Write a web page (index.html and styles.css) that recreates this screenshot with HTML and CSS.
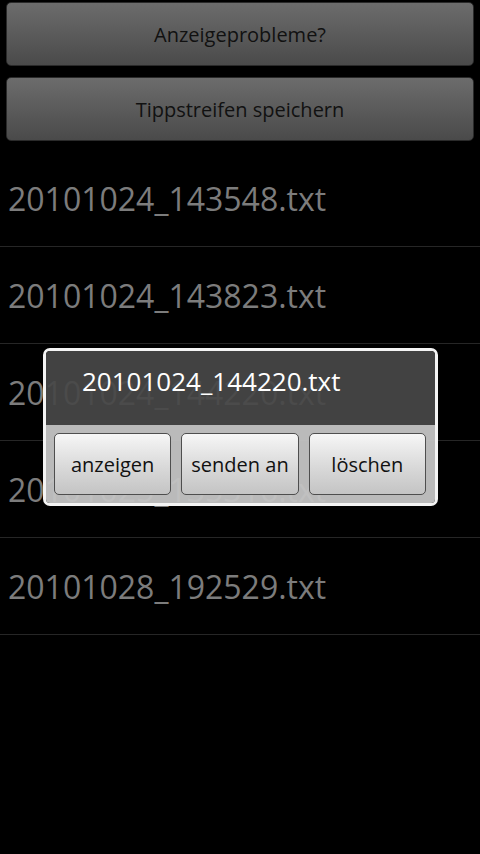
FILE: index.html
```html
<!DOCTYPE html>
<html>
<head>
<meta charset="utf-8">
<link rel="stylesheet" href="styles.css">
</head>
<body>
<div class="screen">
  <div class="actions">
    <div class="btn">Anzeigeprobleme?</div>
    <div class="btn">Tippstreifen speichern</div>
  </div>
  <ul class="list">
    <li>20101024_143548.txt</li>
    <li>20101024_143823.txt</li>
    <li>20101024_144220.txt</li>
    <li>20101025_135316.txt</li>
    <li>20101028_192529.txt</li>
  </ul>
  <div class="dialog">
    <div class="dialog-title">20101024_144220.txt</div>
    <div class="dialog-bar">
      <div class="dbtn">anzeigen</div>
      <div class="dbtn">senden an</div>
      <div class="dbtn">löschen</div>
    </div>
  </div>
</div>
</body>
</html>
```
FILE: styles.css
```css
html, body {
  margin: 0;
  padding: 0;
  background: #000;
}
body {
  font-family: "Open Sans", "DejaVu Sans", sans-serif;
  width: 480px;
  height: 854px;
  overflow: hidden;
}
.screen {
  position: relative;
  width: 480px;
  height: 854px;
  background: #000;
}
.actions {
  display: flex;
  flex-direction: column;
  gap: 11px;
  padding: 2px 6px 0 6px;
}
.btn {
  height: 62px;
  border: 1px solid #2a2a2a;
  border-radius: 5px;
  background: linear-gradient(#6c6c6c, #4a4a4a);
  color: #111;
  font-size: 20px;
  display: flex;
  align-items: center;
  justify-content: center;
}
.list {
  list-style: none;
  margin: 9px 0 0 0;
  padding: 0;
}
.list li {
  height: 96px;
  border-bottom: 1px solid #262626;
  color: #7c7c7c;
  font-size: 32px;
  display: flex;
  align-items: center;
  padding-left: 8px;
}
.dialog {
  position: absolute;
  left: 43px;
  top: 348px;
  width: 389px;
  border: 3px solid #f4f4f4;
  border-radius: 7px;
  overflow: hidden;
}
.dialog-title {
  height: 74px;
  background: rgba(71, 71, 71, 0.93);
  color: #fff;
  font-size: 26px;
  display: flex;
  align-items: center;
  padding-left: 36px;
  padding-bottom: 14px;
  box-sizing: border-box;
}
.dialog-bar {
  background: rgba(196, 196, 196, 0.95);
  display: flex;
  gap: 10px;
  padding: 8px 9px 8px 8px;
}
.dbtn {
  flex: 1;
  height: 60px;
  border: 1px solid #4e4e4e;
  border-radius: 5px;
  background: linear-gradient(#f6f6f6, #d9d9d9 55%, #c4c4c4);
  color: #111;
  font-size: 20px;
  display: flex;
  align-items: center;
  justify-content: center;
}
```
